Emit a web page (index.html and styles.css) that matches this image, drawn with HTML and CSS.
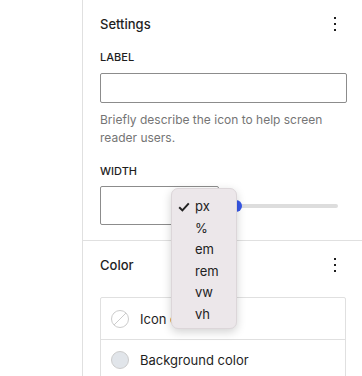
FILE: index.html
```html
<!DOCTYPE html>
<html lang="en">
<head>
    <meta charset="UTF-8">
    <meta name="viewport" content="width=device-width, initial-scale=1.0">
    <title>Icon settings</title>
    <link rel="stylesheet" href="styles.css">
</head>
<body>
    <div class="sidebar">
        <!-- 设置面板 -->
        <section class="panel">
            <div class="panel-head">
                <h2>Settings</h2>
                <span class="more"><svg width="4" height="16" viewBox="0 0 4 16"><rect x="1" y="1" width="2" height="2"/><rect x="1" y="7" width="2" height="2"/><rect x="1" y="13" width="2" height="2"/></svg></span>
            </div>
            <div class="field-label">Label</div>
            <div class="text-input"></div>
            <p class="help">Briefly describe the icon to help screen reader users.</p>
            <div class="field-label field-label-wide">Width</div>
            <div class="width-row">
                <div class="unit-input"></div>
                <div class="range"><span class="thumb"></span></div>
                <ul class="unit-menu">
                    <li><svg class="check" width="12" height="10" viewBox="0 0 12 10"><polyline points="1.2,5.2 4.4,8.4 10.8,1.4"/></svg>px</li>
                    <li>%</li>
                    <li>em</li>
                    <li>rem</li>
                    <li>vw</li>
                    <li>vh</li>
                </ul>
            </div>
        </section>
        <!-- 颜色面板 -->
        <section class="panel panel-color">
            <div class="panel-head">
                <h2>Color</h2>
                <span class="more"><svg width="4" height="16" viewBox="0 0 4 16"><rect x="1" y="1" width="2" height="2"/><rect x="1" y="7" width="2" height="2"/><rect x="1" y="13" width="2" height="2"/></svg></span>
            </div>
            <div class="color-list">
                <div class="color-row"><span class="swatch swatch-none"></span>Icon color</div>
                <div class="color-row"><span class="swatch swatch-bg"></span>Background color</div>
            </div>
        </section>
    </div>
</body>
</html>
```

FILE: styles.css
```css
*{padding:0;margin:0;box-sizing:border-box;}
body{background:#fff;font-family:Inter,"Liberation Sans",sans-serif;color:#1e1e1e;overflow:hidden;}
.sidebar{margin-left:82px;border-left:1px solid #e0e0e0;height:376px;overflow:hidden;}
.panel{padding:12px 15px 15px 17px;}
.panel-color{border-top:1px solid #e0e0e0;}
.panel-head{height:24px;display:flex;align-items:center;justify-content:space-between;}
.panel-head h2{font-size:13px;font-weight:500;}
.more{width:24px;height:24px;display:flex;align-items:center;justify-content:center;}
.more svg{fill:#1e1e1e;}
.field-label{margin-top:13px;font-size:11px;font-weight:500;line-height:16px;text-transform:uppercase;}
.field-label-wide{margin-top:16px;}
.text-input{margin-top:8px;height:30px;border:1px solid #8c8c8c;border-radius:2px;}
.help{margin-top:8px;font-size:12px;line-height:18px;color:#757575;}
.width-row{margin-top:7px;height:39px;display:flex;align-items:center;gap:11px;position:relative;}
.unit-input{width:119px;height:39px;border:1px solid #8c8c8c;border-radius:2px;}
.range{flex:1;margin-right:9px;height:4px;background:#ddd;border-radius:2px;position:relative;}
.thumb{position:absolute;left:0;top:-4px;width:12px;height:12px;border-radius:50%;background:#3858e9;}
/* 单位下拉菜单 */
.unit-menu{position:absolute;left:71px;top:2px;width:66px;height:141px;padding:7px 0 0 23px;list-style:none;background:#ece7ea;border:1px solid #dcd6d9;border-radius:7px;box-shadow:0 3px 10px rgba(0,0,0,.18);z-index:2;}
.unit-menu li{font-size:13px;line-height:21.6px;color:#222;position:relative;}
.check{position:absolute;left:-17px;top:6px;fill:none;stroke:#222;stroke-width:2;}
.color-list{margin-top:20px;margin-right:1px;border:1px solid #e0e0e0;border-radius:2px;}
.color-row{height:41px;display:flex;align-items:center;gap:11px;padding-left:10px;font-size:13px;}
.color-row + .color-row{border-top:1px solid #e0e0e0;}
.swatch{width:18px;height:18px;border-radius:50%;border:1px solid #ccc;}
.swatch-none{background:linear-gradient(-45deg,#fff 47%,#ccc 47%,#ccc 53%,#fff 53%);}
.swatch-bg{background:#e1e5ea;}
```
